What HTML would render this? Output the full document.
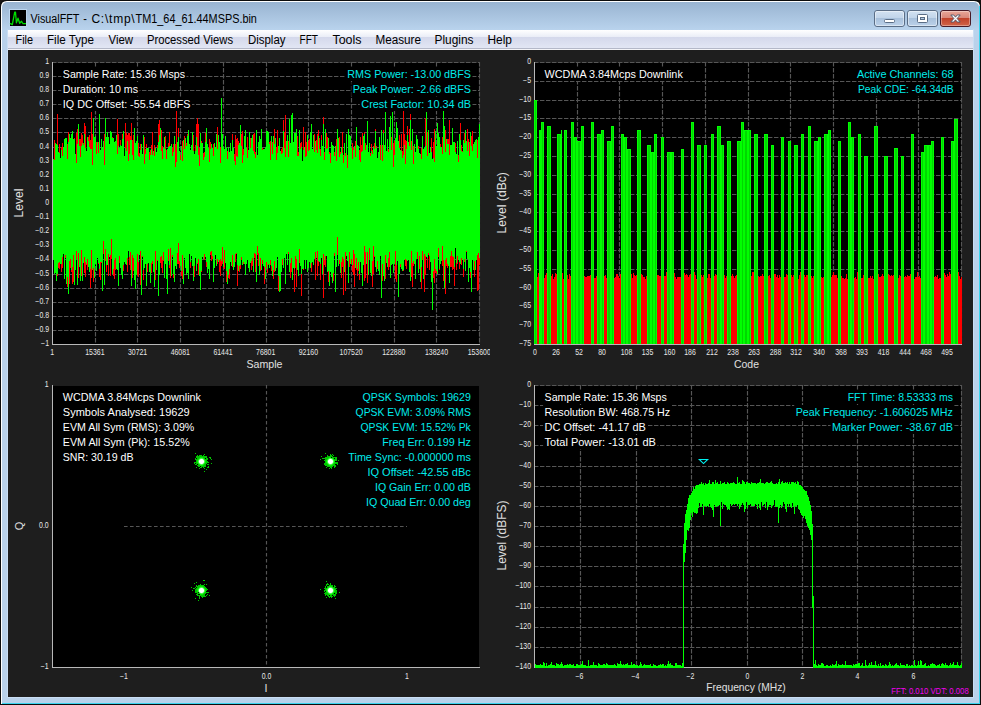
<!DOCTYPE html><html><head><meta charset="utf-8"><title>VisualFFT</title><style>
html,body{margin:0;padding:0;background:#000;}body{width:981px;height:705px;overflow:hidden;position:relative;font-family:"Liberation Sans",sans-serif;}
svg{position:absolute;left:0;top:0;}svg text{font-family:"Liberation Sans",sans-serif;}
</style></head><body>
<svg width="981" height="705" viewBox="0 0 981 705">
<defs>
<radialGradient id="cg"><stop offset="0" stop-color="#fff"/><stop offset="0.55" stop-color="#fff"/><stop offset="1" stop-color="#80ff80" stop-opacity="0"/></radialGradient>
<linearGradient id="fr" gradientUnits="userSpaceOnUse" x1="0" y1="2" x2="0" y2="703"><stop offset="0" stop-color="#99b4d1"/><stop offset="0.04" stop-color="#b9d3ed"/><stop offset="0.06" stop-color="#b9d1ea"/><stop offset="1" stop-color="#b9d1ea"/></linearGradient>
<linearGradient id="mb" x1="0" y1="0" x2="0" y2="1"><stop offset="0" stop-color="#ffffff"/><stop offset="0.385" stop-color="#eaedf7"/><stop offset="0.39" stop-color="#d4d8eb"/><stop offset="1" stop-color="#e2e6f4"/></linearGradient>
<linearGradient id="bt" x1="0" y1="0" x2="0" y2="1"><stop offset="0" stop-color="#d3e2f2"/><stop offset="0.45" stop-color="#c2d5ea"/><stop offset="0.5" stop-color="#a9c1dc"/><stop offset="1" stop-color="#bcd2ea"/></linearGradient>
<linearGradient id="cl" x1="0" y1="0" x2="0" y2="1"><stop offset="0" stop-color="#e9a99b"/><stop offset="0.45" stop-color="#d9887a"/><stop offset="0.5" stop-color="#c1432b"/><stop offset="1" stop-color="#d2664a"/></linearGradient>
</defs>
<rect x="0" y="0" width="981" height="705" fill="#181412"/>
<path d="M0 705V6Q0 0 6 0H975Q981 0 981 6V705z" fill="#0c0c0c"/>
<path d="M1 704V7Q1 1 7 1H974Q980 1 980 7V704z" fill="#ffffff"/>
<path d="M979 8V704H2V703H979z" fill="#3ad4ee"/>
<path d="M2 703V7.5Q2 2 7.5 2H973.5Q979 2 979 7.5V703z" fill="url(#fr)"/>
<rect x="979" y="6" width="1" height="698" fill="#3ad4ee"/>
<path d="M7.5 29.5V697.5H973.5V29.5" fill="none" stroke="#c9ddf3" stroke-width="1"/>
<rect x="8" y="30" width="965" height="18" fill="url(#mb)"/>
<rect x="8" y="48" width="965" height="1" fill="#b4b8c8"/>
<rect x="8" y="49" width="965" height="1" fill="#f4f4f8"/>
<rect x="8" y="50" width="965" height="647" fill="#1e1e1e"/>
<rect x="9.5" y="9.5" width="17" height="17" fill="none" stroke="#bcd5ee" stroke-width="1"/>
<rect x="10" y="10" width="16" height="16" fill="#000"/>
<path d="M10 23.4L12.3 24.6L13.5 18.5L14.7 12.2L15.5 12.2L16.4 22.8L18 18.2L19.7 23.3L21.5 21.3L22.9 23.5L26 23.7" fill="none" stroke="#00dc00" stroke-width="1.3" stroke-linejoin="round"/>
<text x="30.60" y="22.5" font-size="12" fill="#000" textLength="48.80" lengthAdjust="spacingAndGlyphs">VisualFFT</text>
<text x="83.20" y="22.5" font-size="12" fill="#000" textLength="3.60" lengthAdjust="spacingAndGlyphs">-</text>
<text x="91.40" y="22.5" font-size="12" fill="#000" textLength="43.30" lengthAdjust="spacing">C:\tmp\</text>
<text x="135.60" y="22.5" font-size="12" fill="#000" textLength="121.30" lengthAdjust="spacingAndGlyphs">TM1_64_61.44MSPS.bin</text>
<text x="15.50" y="44" font-size="12" fill="#000" textLength="17.50" lengthAdjust="spacingAndGlyphs">File</text>
<text x="47.00" y="44" font-size="12" fill="#000" textLength="47.00" lengthAdjust="spacingAndGlyphs">File Type</text>
<text x="108.50" y="44" font-size="12" fill="#000" textLength="24.50" lengthAdjust="spacingAndGlyphs">View</text>
<text x="147.00" y="44" font-size="12" fill="#000" textLength="86.00" lengthAdjust="spacingAndGlyphs">Processed Views</text>
<text x="248.00" y="44" font-size="12" fill="#000" textLength="37.50" lengthAdjust="spacingAndGlyphs">Display</text>
<text x="299.50" y="44" font-size="12" fill="#000" textLength="18.50" lengthAdjust="spacingAndGlyphs">FFT</text>
<text x="332.50" y="44" font-size="12" fill="#000" textLength="29.00" lengthAdjust="spacingAndGlyphs">Tools</text>
<text x="375.50" y="44" font-size="12" fill="#000" textLength="45.50" lengthAdjust="spacingAndGlyphs">Measure</text>
<text x="434.50" y="44" font-size="12" fill="#000" textLength="39.00" lengthAdjust="spacingAndGlyphs">Plugins</text>
<text x="487.50" y="44" font-size="12" fill="#000" textLength="24.50" lengthAdjust="spacingAndGlyphs">Help</text>
<rect x="874.5" y="10.5" width="30" height="16" rx="2.5" fill="url(#bt)" stroke="#5a6d86"/>
<rect x="907.5" y="10.5" width="30" height="16" rx="2.5" fill="url(#bt)" stroke="#5a6d86"/>
<rect x="940.5" y="10.5" width="30" height="16" rx="2.5" fill="url(#cl)" stroke="#471a26"/>
<rect x="884.5" y="19.5" width="10" height="3" rx="1" fill="#fff" stroke="#5a6d86"/>
<rect x="917.5" y="14.5" width="10" height="8" rx="1" fill="#fff" stroke="#5a6d86"/><rect x="920.5" y="17.5" width="4" height="2" fill="#b6cbe2" stroke="#5a6d86"/>
<path d="M950.8 15H953.8L955.5 17.2L957.2 15H960.2L957.1 18.5L960.2 22H957.2L955.5 19.8L953.8 22H950.8L953.9 18.5z" fill="#fff" stroke="#4a5468" stroke-width="0.9" stroke-linejoin="round"/>
<rect x="875.5" y="11.5" width="28" height="14" rx="1.5" fill="none" stroke="#fff" stroke-opacity="0.45"/>
<rect x="908.5" y="11.5" width="28" height="14" rx="1.5" fill="none" stroke="#fff" stroke-opacity="0.45"/>
<rect x="941.5" y="11.5" width="28" height="14" rx="1.5" fill="none" stroke="#fff" stroke-opacity="0.35"/>
<rect x="53" y="63" width="426" height="281" fill="#000"/>
<path d="M95.5 62V344M137.5 62V344M180.5 62V344M223.5 62V344M266.5 62V344M308.5 62V344M351.5 62V344M394.5 62V344M436.5 62V344M52 76.5H480M52 90.5H480M52 104.5H480M52 118.5H480M52 132.5H480M52 147.5H480M52 161.5H480M52 175.5H480M52 189.5H480M52 203.5H480M52 217.5H480M52 231.5H480M52 245.5H480M52 259.5H480M52 274.5H480M52 288.5H480M52 302.5H480M52 316.5H480M52 330.5H480M52 62.5H480M479.5 62V344" stroke="#565656" stroke-width="1.15" stroke-dasharray="4.4 1.6" fill="none"/>
<path d="M53.5 164V255M54.5 140V260M55.5 151V255M56.5 153V264M57.5 114V276M58.5 158V268M59.5 144V269M60.5 168V246M61.5 147V272M62.5 143V268M63.5 153V253M64.5 140V275M65.5 142V258M66.5 150V261M67.5 144V287M68.5 132V259M69.5 142V284M70.5 143V268M71.5 150V272M72.5 149V284M73.5 145V282M74.5 138V253M75.5 156V253M76.5 133V259M77.5 129V259M78.5 147V278M79.5 139V256M80.5 139V272M81.5 133V276M82.5 135V276M83.5 143V260M84.5 123V273M85.5 126V277M86.5 154V265M87.5 142V270M88.5 137V257M89.5 135V269M90.5 140V288M91.5 112V278M92.5 134V253M93.5 130V282M94.5 148V256M95.5 154V264M96.5 142V251M97.5 145V253M98.5 142V264M99.5 145V277M100.5 153V280M101.5 153V263M102.5 149V278M103.5 162V254M104.5 134V271M105.5 145V261M106.5 163V272M107.5 133V258M108.5 151V276M109.5 157V251M110.5 167V276M111.5 153V259M112.5 137V243M113.5 146V276M114.5 147V279M115.5 143V270M116.5 158V262M117.5 119V258M118.5 134V260M119.5 153V263M120.5 140V264M121.5 157V261M122.5 134V269M123.5 155V271M124.5 157V255M125.5 123V250M126.5 133V254M127.5 135V272M128.5 133V241M129.5 133V265M130.5 136V270M131.5 123V275M132.5 140V278M133.5 135V271M134.5 142V265M135.5 149V263M136.5 155V262M137.5 144V275M138.5 143V277M139.5 153V248M140.5 144V285M141.5 144V285M142.5 154V257M143.5 147V280M144.5 137V265M145.5 149V263M146.5 144V271M147.5 150V272M148.5 168V263M149.5 152V267M150.5 150V267M151.5 145V273M152.5 132V264M153.5 151V262M154.5 145V262M155.5 165V280M156.5 158V247M157.5 145V261M158.5 124V268M159.5 120V270M160.5 130V263M161.5 130V268M162.5 146V273M163.5 156V261M164.5 157V278M165.5 136V260M166.5 150V270M167.5 150V256M168.5 143V261M169.5 132V268M170.5 146V278M171.5 154V270M172.5 148V257M173.5 144V278M174.5 145V270M175.5 144V260M176.5 109V266M177.5 146V264M178.5 128V264M179.5 161V268M180.5 155V259M181.5 154V276M182.5 141V279M183.5 156V263M184.5 136V257M185.5 149V259M186.5 143V251M187.5 134V271M188.5 137V278M189.5 150V254M190.5 151V268M191.5 151V247M192.5 163V258M193.5 135V255M194.5 156V277M195.5 145V258M196.5 124V270M197.5 118V264M198.5 124V275M199.5 148V269M200.5 141V290M201.5 141V272M202.5 160V252M203.5 153V246M204.5 152V260M205.5 133V255M206.5 137V267M207.5 154V271M208.5 150V255M209.5 139V262M210.5 142V255M211.5 146V261M212.5 162V259M213.5 144V273M214.5 155V257M215.5 152V249M216.5 146V265M217.5 127V264M218.5 147V255M219.5 142V272M220.5 147V276M221.5 136V266M222.5 138V264M223.5 156V268M224.5 150V269M225.5 149V257M226.5 161V282M227.5 151V283M228.5 156V278M229.5 162V279M230.5 160V260M231.5 160V261M232.5 134V267M233.5 156V266M234.5 154V249M235.5 135V262M236.5 139V254M237.5 138V286M238.5 141V266M239.5 150V272M240.5 135V269M241.5 134V260M242.5 131V253M243.5 149V264M244.5 137V252M245.5 143V261M246.5 149V258M247.5 137V250M248.5 155V267M249.5 147V258M250.5 138V256M251.5 146V270M252.5 152V266M253.5 134V255M254.5 133V258M255.5 152V272M256.5 155V278M257.5 163V255M258.5 150V266M259.5 147V262M260.5 140V271M261.5 145V254M262.5 148V264M263.5 150V242M264.5 152V284M265.5 149V261M266.5 143V268M267.5 157V273M268.5 144V265M269.5 142V256M270.5 141V265M271.5 153V271M272.5 142V272M273.5 150V279M274.5 129V272M275.5 152V252M276.5 147V259M277.5 130V251M278.5 155V291M279.5 145V286M280.5 151V259M281.5 149V262M282.5 147V265M283.5 120V262M284.5 132V254M285.5 115V262M286.5 145V247M287.5 138V265M288.5 141V254M289.5 146V260M290.5 151V278M291.5 147V272M292.5 155V256M293.5 151V258M294.5 162V292M295.5 143V268M296.5 143V287M297.5 136V261M298.5 152V273M299.5 133V263M300.5 143V260M301.5 142V296M302.5 162V256M303.5 127V270M304.5 157V259M305.5 132V268M306.5 142V258M307.5 165V270M308.5 141V263M309.5 139V256M310.5 144V255M311.5 140V272M312.5 156V259M313.5 158V251M314.5 134V255M315.5 150V280M316.5 140V248M317.5 134V276M318.5 130V266M319.5 138V255M320.5 149V280M321.5 135V258M322.5 157V263M323.5 117V298M324.5 152V265M325.5 143V267M326.5 133V253M327.5 137V256M328.5 148V282M329.5 152V263M330.5 153V270M331.5 153V262M332.5 147V254M333.5 159V281M334.5 152V256M335.5 146V255M336.5 139V258M337.5 150V255M338.5 156V266M339.5 137V264M340.5 152V256M341.5 152V278M342.5 132V267M343.5 155V295M344.5 147V267M345.5 153V291M346.5 156V256M347.5 155V254M348.5 162V254M349.5 154V267M350.5 136V249M351.5 154V264M352.5 143V272M353.5 148V275M354.5 160V287M355.5 141V258M356.5 155V270M357.5 152V276M358.5 151V271M359.5 150V280M360.5 137V260M361.5 145V264M362.5 133V267M363.5 156V260M364.5 132V281M365.5 143V278M366.5 145V258M367.5 142V283M368.5 152V275M369.5 159V260M370.5 153V247M371.5 144V258M372.5 150V287M373.5 146V274M374.5 143V257M375.5 129V257M376.5 146V262M377.5 163V269M378.5 154V268M379.5 149V268M380.5 145V248M381.5 130V271M382.5 145V281M383.5 130V276M384.5 152V268M385.5 147V279M386.5 157V260M387.5 158V263M388.5 149V270M389.5 132V267M390.5 159V266M391.5 137V246M392.5 135V248M393.5 143V269M394.5 141V261M395.5 160V279M396.5 162V282M397.5 136V256M398.5 164V273M399.5 135V264M400.5 151V267M401.5 134V263M402.5 151V271M403.5 97V271M404.5 134V255M405.5 140V266M406.5 141V269M407.5 126V249M408.5 152V257M409.5 129V251M410.5 114V256M411.5 141V277M412.5 129V287M413.5 146V266M414.5 159V262M415.5 153V256M416.5 143V242M417.5 146V259M418.5 146V265M419.5 160V269M420.5 154V282M421.5 148V289M422.5 148V260M423.5 151V265M424.5 155V292M425.5 118V275M426.5 150V257M427.5 132V268M428.5 152V255M429.5 154V270M430.5 148V262M431.5 138V278M432.5 162V272M433.5 142V278M434.5 129V283M435.5 151V273M436.5 159V274M437.5 152V252M438.5 151V257M439.5 145V270M440.5 144V256M441.5 154V255M442.5 137V266M443.5 144V281M444.5 138V253M445.5 130V294M446.5 152V266M447.5 139V268M448.5 139V257M449.5 120V267M450.5 156V267M451.5 161V267M452.5 150V270M453.5 149V269M454.5 143V286M455.5 143V245M456.5 154V270M457.5 162V264M458.5 155V256M459.5 147V269M460.5 123V259M461.5 145V265M462.5 151V258M463.5 143V277M464.5 133V262M465.5 149V270M466.5 144V252M467.5 129V250M468.5 139V268M469.5 142V260M470.5 148V278M471.5 136V270M472.5 131V253M473.5 157V269M474.5 144V277M475.5 144V253M476.5 154V253M477.5 140V291M478.5 161V290M479.5 155V265" stroke="#ff0000" stroke-width="1" fill="none" shape-rendering="crispEdges"/>
<path d="M53.5 159V260M54.5 160V274M55.5 143V273M56.5 144V281M57.5 145V274M58.5 152V263M59.5 153V262M60.5 158V264M61.5 150V264M62.5 156V257M63.5 147V254M64.5 139V279M65.5 138V255M66.5 138V284M67.5 159V277M68.5 142V294M69.5 134V261M70.5 138V259M71.5 134V270M72.5 131V267M73.5 139V255M74.5 139V285M75.5 154V270M76.5 163V251M77.5 144V285M78.5 124V253M79.5 146V267M80.5 157V281M81.5 146V250M82.5 143V281M83.5 145V263M84.5 134V257M85.5 148V262M86.5 151V264M87.5 137V259M88.5 141V267M89.5 147V272M90.5 149V269M91.5 149V250M92.5 165V270M93.5 118V268M94.5 137V278M95.5 136V264M96.5 154V271M97.5 142V258M98.5 153V263M99.5 114V269M100.5 150V262M101.5 139V262M102.5 147V291M103.5 141V241M104.5 165V285M105.5 118V249M106.5 137V265M107.5 132V265M108.5 137V254M109.5 144V257M110.5 131V255M111.5 132V239M112.5 138V274M113.5 138V269M114.5 142V260M115.5 141V258M116.5 135V269M117.5 154V270M118.5 146V286M119.5 148V256M120.5 145V268M121.5 146V275M122.5 139V279M123.5 131V265M124.5 156V262M125.5 148V264M126.5 151V265M127.5 141V258M128.5 161V251M129.5 154V257M130.5 140V252M131.5 140V286M132.5 155V255M133.5 160V258M134.5 128V280M135.5 143V289M136.5 141V275M137.5 136V254M138.5 156V262M139.5 157V255M140.5 150V251M141.5 144V295M142.5 154V256M143.5 135V270M144.5 164V268M145.5 154V264M146.5 148V286M147.5 148V264M148.5 148V263M149.5 160V272M150.5 155V283M151.5 149V263M152.5 155V261M153.5 151V272M154.5 156V287M155.5 148V251M156.5 152V270M157.5 148V260M158.5 142V296M159.5 135V275M160.5 128V257M161.5 151V256M162.5 159V260M163.5 148V252M164.5 137V278M165.5 149V264M166.5 159V279M167.5 149V294M168.5 147V249M169.5 146V265M170.5 146V248M171.5 144V276M172.5 156V255M173.5 152V274M174.5 136V282M175.5 167V266M176.5 162V269M177.5 142V253M178.5 137V243M179.5 151V261M180.5 160V266M181.5 146V271M182.5 161V255M183.5 140V284M184.5 149V258M185.5 138V268M186.5 146V275M187.5 136V273M188.5 130V279M189.5 144V254M190.5 150V262M191.5 145V256M192.5 132V266M193.5 151V281M194.5 154V266M195.5 151V258M196.5 137V271M197.5 146V263M198.5 155V259M199.5 166V276M200.5 133V290M201.5 143V271M202.5 143V257M203.5 160V259M204.5 157V254M205.5 142V257M206.5 128V262M207.5 144V273M208.5 148V269M209.5 162V279M210.5 149V252M211.5 144V251M212.5 148V256M213.5 156V282M214.5 143V268M215.5 147V255M216.5 134V266M217.5 149V259M218.5 135V262M219.5 142V260M220.5 163V259M221.5 98V261M222.5 134V247M223.5 147V267M224.5 149V250M225.5 136V263M226.5 148V271M227.5 159V284M228.5 147V275M229.5 152V269M230.5 143V262M231.5 151V266M232.5 140V255M233.5 148V270M234.5 161V267M235.5 165V254M236.5 156V253M237.5 157V265M238.5 145V271M239.5 143V266M240.5 125V265M241.5 146V257M242.5 163V265M243.5 155V262M244.5 136V264M245.5 130V275M246.5 148V264M247.5 158V260M248.5 150V268M249.5 132V272M250.5 148V263M251.5 138V261M252.5 135V258M253.5 151V272M254.5 154V253M255.5 158V254M256.5 130V282M257.5 155V246M258.5 142V253M259.5 136V275M260.5 139V258M261.5 129V270M262.5 150V260M263.5 149V266M264.5 149V267M265.5 147V279M266.5 131V262M267.5 131V269M268.5 132V264M269.5 144V268M270.5 160V260M271.5 136V266M272.5 154V276M273.5 136V270M274.5 144V261M275.5 138V271M276.5 160V268M277.5 153V257M278.5 146V276M279.5 138V292M280.5 151V291M281.5 154V272M282.5 153V259M283.5 131V268M284.5 148V258M285.5 157V284M286.5 141V254M287.5 135V265M288.5 157V252M289.5 119V272M290.5 143V263M291.5 115V258M292.5 113V280M293.5 142V268M294.5 133V269M295.5 133V256M296.5 129V259M297.5 156V270M298.5 156V276M299.5 130V249M300.5 149V266M301.5 147V274M302.5 161V269M303.5 150V269M304.5 147V260M305.5 157V269M306.5 156V260M307.5 135V272M308.5 151V268M309.5 150V262M310.5 132V268M311.5 124V263M312.5 149V262M313.5 135V265M314.5 152V259M315.5 141V252M316.5 150V258M317.5 153V251M318.5 136V261M319.5 149V262M320.5 156V264M321.5 140V258M322.5 146V274M323.5 124V254M324.5 160V260M325.5 129V256M326.5 149V256M327.5 148V272M328.5 138V271M329.5 154V286M330.5 163V272M331.5 142V277M332.5 145V283M333.5 146V273M334.5 156V253M335.5 146V292M336.5 161V267M337.5 129V237M338.5 138V266M339.5 157V260M340.5 154V273M341.5 147V262M342.5 153V257M343.5 163V259M344.5 143V272M345.5 156V252M346.5 134V256M347.5 168V261M348.5 129V283M349.5 135V252M350.5 136V264M351.5 148V259M352.5 159V265M353.5 150V250M354.5 146V254M355.5 157V268M356.5 127V258M357.5 145V269M358.5 146V262M359.5 160V274M360.5 162V262M361.5 152V273M362.5 151V286M363.5 136V265M364.5 134V246M365.5 150V252M366.5 145V264M367.5 121V252M368.5 152V275M369.5 143V248M370.5 156V273M371.5 151V276M372.5 154V261M373.5 147V246M374.5 149V256M375.5 131V267M376.5 148V272M377.5 158V261M378.5 152V271M379.5 137V275M380.5 160V256M381.5 130V298M382.5 161V264M383.5 133V276M384.5 145V281M385.5 112V255M386.5 151V263M387.5 139V267M388.5 152V258M389.5 127V252M390.5 116V278M391.5 150V265M392.5 112V264M393.5 167V273M394.5 155V264M395.5 138V251M396.5 122V265M397.5 128V261M398.5 141V297M399.5 148V274M400.5 150V264M401.5 151V269M402.5 158V271M403.5 155V270M404.5 145V260M405.5 164V259M406.5 149V260M407.5 135V261M408.5 142V260M409.5 146V272M410.5 120V281M411.5 150V251M412.5 129V263M413.5 164V261M414.5 144V264M415.5 152V279M416.5 135V259M417.5 139V252M418.5 149V273M419.5 153V256M420.5 154V282M421.5 159V267M422.5 136V251M423.5 149V279M424.5 148V254M425.5 146V256M426.5 112V257M427.5 156V258M428.5 130V253M429.5 153V256M430.5 147V262M431.5 152V282M432.5 159V310M433.5 158V271M434.5 162V259M435.5 131V269M436.5 146V271M437.5 123V274M438.5 133V248M439.5 137V269M440.5 147V264M441.5 147V261M442.5 154V246M443.5 104V260M444.5 126V288M445.5 152V260M446.5 139V258M447.5 144V264M448.5 144V266M449.5 155V283M450.5 145V256M451.5 145V251M452.5 128V256M453.5 142V257M454.5 142V267M455.5 152V248M456.5 154V263M457.5 141V256M458.5 162V260M459.5 134V262M460.5 140V264M461.5 151V258M462.5 152V260M463.5 140V269M464.5 143V259M465.5 130V271M466.5 141V251M467.5 151V259M468.5 142V282M469.5 156V268M470.5 132V272M471.5 146V292M472.5 151V260M473.5 144V270M474.5 142V261M475.5 140V270M476.5 139V260M477.5 158V255M478.5 137V253M479.5 124V258" stroke="#00ff00" stroke-width="1" fill="none" shape-rendering="crispEdges"/>
<path d="M52.5 62V345M52 344.5H480" stroke="#b8b8b8" stroke-width="1" fill="none" shape-rendering="crispEdges"/>
<text x="45.15" y="64.3" font-size="8.4" fill="#e8e8e8" textLength="3.85" lengthAdjust="spacingAndGlyphs">1</text>
<text x="39.40" y="78.3" font-size="8.4" fill="#e8e8e8" textLength="9.60" lengthAdjust="spacingAndGlyphs">0.9</text>
<text x="39.40" y="92.3" font-size="8.4" fill="#e8e8e8" textLength="9.60" lengthAdjust="spacingAndGlyphs">0.8</text>
<text x="39.40" y="106.3" font-size="8.4" fill="#e8e8e8" textLength="9.60" lengthAdjust="spacingAndGlyphs">0.7</text>
<text x="39.40" y="120.3" font-size="8.4" fill="#e8e8e8" textLength="9.60" lengthAdjust="spacingAndGlyphs">0.6</text>
<text x="39.40" y="134.3" font-size="8.4" fill="#e8e8e8" textLength="9.60" lengthAdjust="spacingAndGlyphs">0.5</text>
<text x="39.40" y="149.3" font-size="8.4" fill="#e8e8e8" textLength="9.60" lengthAdjust="spacingAndGlyphs">0.4</text>
<text x="39.40" y="163.3" font-size="8.4" fill="#e8e8e8" textLength="9.60" lengthAdjust="spacingAndGlyphs">0.3</text>
<text x="39.40" y="177.3" font-size="8.4" fill="#e8e8e8" textLength="9.60" lengthAdjust="spacingAndGlyphs">0.2</text>
<text x="39.40" y="191.3" font-size="8.4" fill="#e8e8e8" textLength="9.60" lengthAdjust="spacingAndGlyphs">0.1</text>
<text x="45.15" y="205.3" font-size="8.4" fill="#e8e8e8" textLength="3.85" lengthAdjust="spacingAndGlyphs">0</text>
<text x="35.35" y="219.3" font-size="8.4" fill="#e8e8e8" textLength="13.65" lengthAdjust="spacingAndGlyphs">−0.1</text>
<text x="35.35" y="233.3" font-size="8.4" fill="#e8e8e8" textLength="13.65" lengthAdjust="spacingAndGlyphs">−0.2</text>
<text x="35.35" y="247.3" font-size="8.4" fill="#e8e8e8" textLength="13.65" lengthAdjust="spacingAndGlyphs">−0.3</text>
<text x="35.35" y="261.3" font-size="8.4" fill="#e8e8e8" textLength="13.65" lengthAdjust="spacingAndGlyphs">−0.4</text>
<text x="35.35" y="276.3" font-size="8.4" fill="#e8e8e8" textLength="13.65" lengthAdjust="spacingAndGlyphs">−0.5</text>
<text x="35.35" y="290.3" font-size="8.4" fill="#e8e8e8" textLength="13.65" lengthAdjust="spacingAndGlyphs">−0.6</text>
<text x="35.35" y="304.3" font-size="8.4" fill="#e8e8e8" textLength="13.65" lengthAdjust="spacingAndGlyphs">−0.7</text>
<text x="35.35" y="318.3" font-size="8.4" fill="#e8e8e8" textLength="13.65" lengthAdjust="spacingAndGlyphs">−0.8</text>
<text x="35.35" y="332.3" font-size="8.4" fill="#e8e8e8" textLength="13.65" lengthAdjust="spacingAndGlyphs">−0.9</text>
<text x="41.10" y="346.3" font-size="8.4" fill="#e8e8e8" textLength="7.90" lengthAdjust="spacingAndGlyphs">−1</text>
<text x="50.28" y="355" font-size="8.4" fill="#e8e8e8" textLength="3.85" lengthAdjust="spacingAndGlyphs">1</text>
<text x="85.28" y="355" font-size="8.4" fill="#e8e8e8" textLength="19.25" lengthAdjust="spacingAndGlyphs">15361</text>
<text x="127.98" y="355" font-size="8.4" fill="#e8e8e8" textLength="19.25" lengthAdjust="spacingAndGlyphs">30721</text>
<text x="170.68" y="355" font-size="8.4" fill="#e8e8e8" textLength="19.25" lengthAdjust="spacingAndGlyphs">46081</text>
<text x="213.38" y="355" font-size="8.4" fill="#e8e8e8" textLength="19.25" lengthAdjust="spacingAndGlyphs">61441</text>
<text x="256.07" y="355" font-size="8.4" fill="#e8e8e8" textLength="19.25" lengthAdjust="spacingAndGlyphs">76801</text>
<text x="298.78" y="355" font-size="8.4" fill="#e8e8e8" textLength="19.25" lengthAdjust="spacingAndGlyphs">92160</text>
<text x="339.55" y="355" font-size="8.4" fill="#e8e8e8" textLength="23.10" lengthAdjust="spacingAndGlyphs">107520</text>
<text x="382.25" y="355" font-size="8.4" fill="#e8e8e8" textLength="23.10" lengthAdjust="spacingAndGlyphs">122880</text>
<text x="424.95" y="355" font-size="8.4" fill="#e8e8e8" textLength="23.10" lengthAdjust="spacingAndGlyphs">138240</text>
<text x="467.65" y="355" font-size="8.4" fill="#e8e8e8" textLength="23.10" lengthAdjust="spacingAndGlyphs">153600</text>
<rect x="490" y="346" width="12" height="12" fill="#1e1e1e"/>
<text x="246.50" y="368" font-size="10.7" fill="#e0e0e0" textLength="36.00" lengthAdjust="spacingAndGlyphs">Sample</text>
<text transform="translate(23 217.50) rotate(-90)" font-size="12.5" fill="#e0e0e0" textLength="29.00" lengthAdjust="spacingAndGlyphs">Level</text>
<rect x="61.3" y="67" width="125.2" height="14" fill="#000"/>
<text x="62.80" y="78" font-size="11" fill="#ffffff" textLength="122.20" lengthAdjust="spacingAndGlyphs">Sample Rate: 15.36 Msps</text>
<rect x="61.3" y="82" width="78.2" height="14" fill="#000"/>
<text x="62.80" y="93" font-size="11" fill="#ffffff" textLength="75.20" lengthAdjust="spacingAndGlyphs">Duration: 10 ms</text>
<rect x="61.3" y="97" width="130.7" height="14" fill="#000"/>
<text x="62.80" y="108" font-size="11" fill="#ffffff" textLength="127.70" lengthAdjust="spacingAndGlyphs">IQ DC Offset: -55.54 dBFS</text>
<rect x="345.8" y="67" width="126.7" height="14" fill="#000"/>
<text x="347.30" y="78" font-size="11" fill="#00ecec" textLength="123.70" lengthAdjust="spacingAndGlyphs">RMS Power: -13.00 dBFS</text>
<rect x="351.3" y="82" width="121.2" height="14" fill="#000"/>
<text x="352.80" y="93" font-size="11" fill="#00ecec" textLength="118.20" lengthAdjust="spacingAndGlyphs">Peak Power: -2.66 dBFS</text>
<rect x="359.8" y="97" width="112.7" height="14" fill="#000"/>
<text x="361.30" y="108" font-size="11" fill="#00ecec" textLength="109.70" lengthAdjust="spacingAndGlyphs">Crest Factor: 10.34 dB</text>
<rect x="535" y="63" width="426" height="281" fill="#000"/>
<path d="M577.5 62V344M619.5 62V344M662.5 62V344M705.5 62V344M748.5 62V344M790.5 62V344M833.5 62V344M876.5 62V344M918.5 62V344M534 81.5H962M534 100.5H962M534 118.5H962M534 137.5H962M534 156.5H962M534 175.5H962M534 194.5H962M534 212.5H962M534 231.5H962M534 250.5H962M534 269.5H962M534 288.5H962M534 306.5H962M534 325.5H962M534 62.5H962M961.5 62V344" stroke="#565656" stroke-width="1.15" stroke-dasharray="4.4 1.6" fill="none"/>
<path d="M535.5 276V344M536.5 275V344M537.5 277V344M538.5 273V344M539.5 274V344M540.5 279V344M541.5 274V344M542.5 276V344M543.5 273V344M544.5 278V344M545.5 275V344M546.5 273V344M547.5 274V344M548.5 277V344M549.5 277V344M550.5 274V344M551.5 276V344M552.5 274V344M553.5 279V344M554.5 277V344M555.5 273V344M556.5 274V344M557.5 276V344M558.5 273V344M559.5 277V344M560.5 273V344M561.5 276V344M562.5 273V344M563.5 279V344M564.5 275V344M565.5 276V344M566.5 277V344M567.5 275V344M568.5 279V344M569.5 274V344M570.5 276V344M571.5 279V344M572.5 275V344M573.5 274V344M574.5 275V344M575.5 276V344M576.5 274V344M577.5 279V344M578.5 274V344M579.5 273V344M580.5 275V344M581.5 278V344M582.5 279V344M583.5 277V344M584.5 276V344M585.5 277V344M586.5 277V344M587.5 276V344M588.5 276V344M589.5 276V344M590.5 275V344M591.5 276V344M592.5 274V344M593.5 276V344M594.5 278V344M595.5 278V344M596.5 276V344M597.5 277V344M598.5 276V344M599.5 274V344M600.5 274V344M601.5 278V344M602.5 277V344M603.5 275V344M604.5 276V344M605.5 275V344M606.5 278V344M607.5 277V344M608.5 273V344M609.5 274V344M610.5 279V344M611.5 276V344M612.5 276V344M613.5 276V344M614.5 278V344M615.5 277V344M616.5 274V344M617.5 274V344M618.5 276V344M619.5 278V344M620.5 274V344M621.5 273V344M622.5 276V344M623.5 277V344M624.5 276V344M625.5 277V344M626.5 276V344M627.5 272V344M628.5 277V344M629.5 276V344M630.5 275V344M631.5 274V344M632.5 278V344M633.5 273V344M634.5 275V344M635.5 276V344M636.5 275V344M637.5 276V344M638.5 277V344M639.5 277V344M640.5 278V344M641.5 274V344M642.5 275V344M643.5 277V344M644.5 277V344M645.5 279V344M646.5 276V344M647.5 275V344M648.5 277V344M649.5 279V344M650.5 276V344M651.5 277V344M652.5 276V344M653.5 277V344M654.5 276V344M655.5 275V344M656.5 274V344M657.5 275V344M658.5 275V344M659.5 276V344M660.5 276V344M661.5 272V344M662.5 278V344M663.5 275V344M664.5 276V344M665.5 276V344M666.5 272V344M667.5 275V344M668.5 277V344M669.5 279V344M670.5 276V344M671.5 276V344M672.5 275V344M673.5 278V344M674.5 273V344M675.5 277V344M676.5 279V344M677.5 277V344M678.5 277V344M679.5 277V344M680.5 277V344M681.5 274V344M682.5 278V344M683.5 277V344M684.5 273V344M685.5 275V344M686.5 274V344M687.5 275V344M688.5 277V344M689.5 275V344M690.5 274V344M691.5 276V344M692.5 273V344M693.5 274V344M694.5 272V344M695.5 275V344M696.5 279V344M697.5 274V344M698.5 276V344M699.5 272V344M700.5 274V344M701.5 275V344M702.5 277V344M703.5 275V344M704.5 276V344M705.5 276V344M706.5 276V344M707.5 278V344M708.5 274V344M709.5 274V344M710.5 278V344M711.5 277V344M712.5 278V344M713.5 278V344M714.5 276V344M715.5 274V344M716.5 275V344M717.5 274V344M718.5 276V344M719.5 276V344M720.5 278V344M721.5 275V344M722.5 278V344M723.5 272V344M724.5 275V344M725.5 278V344M726.5 276V344M727.5 275V344M728.5 279V344M729.5 272V344M730.5 278V344M731.5 276V344M732.5 274V344M733.5 276V344M734.5 278V344M735.5 276V344M736.5 275V344M737.5 276V344M738.5 276V344M739.5 279V344M740.5 279V344M741.5 278V344M742.5 276V344M743.5 276V344M744.5 275V344M745.5 276V344M746.5 277V344M747.5 276V344M748.5 275V344M749.5 278V344M750.5 278V344M751.5 276V344M752.5 272V344M753.5 272V344M754.5 276V344M755.5 278V344M756.5 276V344M757.5 275V344M758.5 276V344M759.5 277V344M760.5 276V344M761.5 276V344M762.5 274V344M763.5 276V344M764.5 274V344M765.5 276V344M766.5 278V344M767.5 275V344M768.5 276V344M769.5 275V344M770.5 278V344M771.5 272V344M772.5 278V344M773.5 276V344M774.5 274V344M775.5 274V344M776.5 277V344M777.5 275V344M778.5 278V344M779.5 275V344M780.5 277V344M781.5 276V344M782.5 274V344M783.5 277V344M784.5 277V344M785.5 277V344M786.5 274V344M787.5 275V344M788.5 275V344M789.5 275V344M790.5 272V344M791.5 275V344M792.5 277V344M793.5 275V344M794.5 278V344M795.5 276V344M796.5 275V344M797.5 279V344M798.5 279V344M799.5 275V344M800.5 272V344M801.5 272V344M802.5 274V344M803.5 278V344M804.5 275V344M805.5 277V344M806.5 275V344M807.5 275V344M808.5 272V344M809.5 276V344M810.5 275V344M811.5 276V344M812.5 278V344M813.5 276V344M814.5 276V344M815.5 276V344M816.5 279V344M817.5 277V344M818.5 275V344M819.5 273V344M820.5 276V344M821.5 277V344M822.5 278V344M823.5 277V344M824.5 278V344M825.5 275V344M826.5 279V344M827.5 275V344M828.5 278V344M829.5 278V344M830.5 272V344M831.5 277V344M832.5 275V344M833.5 272V344M834.5 275V344M835.5 275V344M836.5 275V344M837.5 278V344M838.5 274V344M839.5 279V344M840.5 273V344M841.5 276V344M842.5 278V344M843.5 278V344M844.5 279V344M845.5 278V344M846.5 274V344M847.5 279V344M848.5 273V344M849.5 276V344M850.5 275V344M851.5 276V344M852.5 273V344M853.5 274V344M854.5 278V344M855.5 277V344M856.5 279V344M857.5 272V344M858.5 274V344M859.5 277V344M860.5 276V344M861.5 278V344M862.5 278V344M863.5 275V344M864.5 276V344M865.5 277V344M866.5 278V344M867.5 279V344M868.5 278V344M869.5 278V344M870.5 276V344M871.5 278V344M872.5 276V344M873.5 279V344M874.5 275V344M875.5 277V344M876.5 275V344M877.5 277V344M878.5 274V344M879.5 277V344M880.5 277V344M881.5 276V344M882.5 274V344M883.5 276V344M884.5 277V344M885.5 274V344M886.5 275V344M887.5 276V344M888.5 274V344M889.5 275V344M890.5 276V344M891.5 275V344M892.5 276V344M893.5 275V344M894.5 277V344M895.5 276V344M896.5 274V344M897.5 277V344M898.5 278V344M899.5 275V344M900.5 276V344M901.5 275V344M902.5 277V344M903.5 278V344M904.5 277V344M905.5 276V344M906.5 277V344M907.5 275V344M908.5 276V344M909.5 276V344M910.5 274V344M911.5 276V344M912.5 272V344M913.5 276V344M914.5 279V344M915.5 277V344M916.5 277V344M917.5 272V344M918.5 277V344M919.5 276V344M920.5 278V344M921.5 276V344M922.5 278V344M923.5 274V344M924.5 274V344M925.5 276V344M926.5 274V344M927.5 274V344M928.5 276V344M929.5 276V344M930.5 273V344M931.5 275V344M932.5 276V344M933.5 275V344M934.5 277V344M935.5 276V344M936.5 277V344M937.5 275V344M938.5 279V344M939.5 278V344M940.5 278V344M941.5 276V344M942.5 274V344M943.5 276V344M944.5 273V344M945.5 275V344M946.5 277V344M947.5 274V344M948.5 276V344M949.5 272V344M950.5 274V344M951.5 276V344M952.5 274V344M953.5 276V344M954.5 274V344M955.5 276V344M956.5 274V344M957.5 277V344M958.5 272V344M959.5 276V344M960.5 279V344M961.5 277V344" stroke="#ff0000" stroke-width="1" fill="none" shape-rendering="crispEdges"/>
<path d="M534.5 62V345M534 344.5H962" stroke="#b8b8b8" stroke-width="1" fill="none" shape-rendering="crispEdges"/>
<path d="M534 100H537V344H534zM539 130H541V344H539zM541 122H544V344H541zM547 126H551V344H547zM557 134H561V344H557zM561 130H562V344H561zM564 130H567V344H564zM571 122H574V344H571zM574 137H577V344H574zM577 141H581V344H577zM581 126H584V344H581zM591 122H594V344H591zM597 134H601V344H597zM601 130H604V344H601zM607 141H611V344H607zM611 126H614V344H611zM621 134H624V344H621zM624 137H627V344H624zM627 149H631V344H627zM637 130H641V344H637zM647 145H651V344H647zM651 152H654V344H651zM654 134H657V344H654zM661 137H664V344H661zM667 152H671V344H667zM671 152H674V344H671zM681 149H684V344H681zM691 122H694V344H691zM697 145H701V344H697zM704 145H707V344H704zM711 134H714V344H711zM717 126H721V344H717zM721 145H724V344H721zM727 141H731V344H727zM737 141H741V344H737zM741 122H744V344H741zM744 130H748V344H744zM748 130H751V344H748zM754 134H758V344H754zM764 134H768V344H764zM771 145H774V344H771zM781 137H784V344H781zM788 141H791V344H788zM794 145H798V344H794zM801 134H804V344H801zM808 126H811V344H808zM814 141H818V344H814zM818 137H821V344H818zM824 134H828V344H824zM828 130H831V344H828zM838 141H841V344H838zM848 122H851V344H848zM851 137H854V344H851zM858 134H861V344H858zM864 156H868V344H864zM874 126H878V344H874zM884 156H888V344H884zM894 148H898V344H894zM901 156H904V344H901zM911 134H914V344H911zM921 152H924V344H921zM924 145H928V344H924zM928 145H931V344H928zM931 141H934V344H931zM941 137H944V344H941zM951 141H954V344H951zM954 119H958V344H954z" fill="#00ff00" shape-rendering="crispEdges"/>
<path d="M535 101H536V344H535zM542 123H543V344H542zM548 127H550V344H548zM558 135H560V344H558zM565 131H566V344H565zM572 123H573V344H572zM575 138H576V344H575zM578 142H580V344H578zM582 127H583V344H582zM592 123H593V344H592zM598 135H600V344H598zM602 131H603V344H602zM608 142H610V344H608zM612 127H613V344H612zM622 135H623V344H622zM625 138H626V344H625zM628 150H630V344H628zM638 131H640V344H638zM648 146H650V344H648zM652 153H653V344H652zM655 135H656V344H655zM662 138H663V344H662zM668 153H670V344H668zM672 153H673V344H672zM682 150H683V344H682zM692 123H693V344H692zM698 146H700V344H698zM705 146H706V344H705zM712 135H713V344H712zM718 127H720V344H718zM722 146H723V344H722zM728 142H730V344H728zM738 142H740V344H738zM742 123H743V344H742zM745 131H747V344H745zM749 131H750V344H749zM755 135H757V344H755zM765 135H767V344H765zM772 146H773V344H772zM782 138H783V344H782zM789 142H790V344H789zM795 146H797V344H795zM802 135H803V344H802zM809 127H810V344H809zM815 142H817V344H815zM819 138H820V344H819zM825 135H827V344H825zM829 131H830V344H829zM839 142H840V344H839zM849 123H850V344H849zM852 138H853V344H852zM859 135H860V344H859zM865 157H867V344H865zM875 127H877V344H875zM885 157H887V344H885zM895 149H897V344H895zM902 157H903V344H902zM912 135H913V344H912zM922 153H923V344H922zM925 146H927V344H925zM929 146H930V344H929zM932 142H933V344H932zM942 138H943V344H942zM952 142H953V344H952zM955 120H957V344H955z" fill="#00d800" shape-rendering="crispEdges"/>
<text x="527.15" y="64.3" font-size="8.4" fill="#e8e8e8" textLength="3.85" lengthAdjust="spacingAndGlyphs">0</text>
<text x="523.10" y="83.3" font-size="8.4" fill="#e8e8e8" textLength="7.90" lengthAdjust="spacingAndGlyphs">−5</text>
<text x="519.25" y="102.3" font-size="8.4" fill="#e8e8e8" textLength="11.75" lengthAdjust="spacingAndGlyphs">−10</text>
<text x="519.25" y="120.3" font-size="8.4" fill="#e8e8e8" textLength="11.75" lengthAdjust="spacingAndGlyphs">−15</text>
<text x="519.25" y="139.3" font-size="8.4" fill="#e8e8e8" textLength="11.75" lengthAdjust="spacingAndGlyphs">−20</text>
<text x="519.25" y="158.3" font-size="8.4" fill="#e8e8e8" textLength="11.75" lengthAdjust="spacingAndGlyphs">−25</text>
<text x="519.25" y="177.3" font-size="8.4" fill="#e8e8e8" textLength="11.75" lengthAdjust="spacingAndGlyphs">−30</text>
<text x="519.25" y="196.3" font-size="8.4" fill="#e8e8e8" textLength="11.75" lengthAdjust="spacingAndGlyphs">−35</text>
<text x="519.25" y="214.3" font-size="8.4" fill="#e8e8e8" textLength="11.75" lengthAdjust="spacingAndGlyphs">−40</text>
<text x="519.25" y="233.3" font-size="8.4" fill="#e8e8e8" textLength="11.75" lengthAdjust="spacingAndGlyphs">−45</text>
<text x="519.25" y="252.3" font-size="8.4" fill="#e8e8e8" textLength="11.75" lengthAdjust="spacingAndGlyphs">−50</text>
<text x="519.25" y="271.3" font-size="8.4" fill="#e8e8e8" textLength="11.75" lengthAdjust="spacingAndGlyphs">−55</text>
<text x="519.25" y="290.3" font-size="8.4" fill="#e8e8e8" textLength="11.75" lengthAdjust="spacingAndGlyphs">−60</text>
<text x="519.25" y="308.3" font-size="8.4" fill="#e8e8e8" textLength="11.75" lengthAdjust="spacingAndGlyphs">−65</text>
<text x="519.25" y="327.3" font-size="8.4" fill="#e8e8e8" textLength="11.75" lengthAdjust="spacingAndGlyphs">−70</text>
<text x="519.25" y="346.3" font-size="8.4" fill="#e8e8e8" textLength="11.75" lengthAdjust="spacingAndGlyphs">−75</text>
<text x="533.08" y="355" font-size="8.4" fill="#e8e8e8" textLength="3.85" lengthAdjust="spacingAndGlyphs">0</text>
<text x="552.15" y="355" font-size="8.4" fill="#e8e8e8" textLength="7.70" lengthAdjust="spacingAndGlyphs">26</text>
<text x="575.15" y="355" font-size="8.4" fill="#e8e8e8" textLength="7.70" lengthAdjust="spacingAndGlyphs">52</text>
<text x="598.15" y="355" font-size="8.4" fill="#e8e8e8" textLength="7.70" lengthAdjust="spacingAndGlyphs">80</text>
<text x="620.73" y="355" font-size="8.4" fill="#e8e8e8" textLength="11.55" lengthAdjust="spacingAndGlyphs">108</text>
<text x="641.73" y="355" font-size="8.4" fill="#e8e8e8" textLength="11.55" lengthAdjust="spacingAndGlyphs">135</text>
<text x="663.73" y="355" font-size="8.4" fill="#e8e8e8" textLength="11.55" lengthAdjust="spacingAndGlyphs">160</text>
<text x="684.23" y="355" font-size="8.4" fill="#e8e8e8" textLength="11.55" lengthAdjust="spacingAndGlyphs">186</text>
<text x="706.23" y="355" font-size="8.4" fill="#e8e8e8" textLength="11.55" lengthAdjust="spacingAndGlyphs">212</text>
<text x="727.23" y="355" font-size="8.4" fill="#e8e8e8" textLength="11.55" lengthAdjust="spacingAndGlyphs">238</text>
<text x="748.23" y="355" font-size="8.4" fill="#e8e8e8" textLength="11.55" lengthAdjust="spacingAndGlyphs">263</text>
<text x="769.73" y="355" font-size="8.4" fill="#e8e8e8" textLength="11.55" lengthAdjust="spacingAndGlyphs">288</text>
<text x="790.23" y="355" font-size="8.4" fill="#e8e8e8" textLength="11.55" lengthAdjust="spacingAndGlyphs">312</text>
<text x="813.23" y="355" font-size="8.4" fill="#e8e8e8" textLength="11.55" lengthAdjust="spacingAndGlyphs">340</text>
<text x="835.23" y="355" font-size="8.4" fill="#e8e8e8" textLength="11.55" lengthAdjust="spacingAndGlyphs">368</text>
<text x="856.23" y="355" font-size="8.4" fill="#e8e8e8" textLength="11.55" lengthAdjust="spacingAndGlyphs">393</text>
<text x="877.73" y="355" font-size="8.4" fill="#e8e8e8" textLength="11.55" lengthAdjust="spacingAndGlyphs">418</text>
<text x="899.23" y="355" font-size="8.4" fill="#e8e8e8" textLength="11.55" lengthAdjust="spacingAndGlyphs">444</text>
<text x="920.23" y="355" font-size="8.4" fill="#e8e8e8" textLength="11.55" lengthAdjust="spacingAndGlyphs">468</text>
<text x="941.23" y="355" font-size="8.4" fill="#e8e8e8" textLength="11.55" lengthAdjust="spacingAndGlyphs">495</text>
<text x="734.00" y="368" font-size="10.7" fill="#e0e0e0" textLength="25.00" lengthAdjust="spacingAndGlyphs">Code</text>
<text transform="translate(505.5 233.45) rotate(-90)" font-size="12.5" fill="#e0e0e0" textLength="61.30" lengthAdjust="spacingAndGlyphs">Level (dBc)</text>
<rect x="543.1" y="67" width="141.2" height="14" fill="#000"/>
<text x="544.60" y="78" font-size="11" fill="#ffffff" textLength="138.20" lengthAdjust="spacingAndGlyphs">WCDMA 3.84Mcps Downlink</text>
<rect x="855.4" y="67" width="99.7" height="14" fill="#000"/>
<text x="856.90" y="78" font-size="11" fill="#00ecec" textLength="96.70" lengthAdjust="spacingAndGlyphs">Active Channels: 68</text>
<rect x="856.4" y="82" width="98.7" height="14" fill="#000"/>
<text x="857.90" y="93" font-size="11" fill="#00ecec" textLength="95.70" lengthAdjust="spacingAndGlyphs">Peak CDE: -64.34dB</text>
<rect x="53" y="386" width="426" height="281" fill="#000"/>
<path d="M266.5 385V667M124 526.5H407" stroke="#565656" stroke-width="1.15" stroke-dasharray="3.6 2.4" fill="none"/>
<path d="M195 453h1v1h-1zM204 454h1v1h-1zM197 455h1v1h-1zM199 455h1v1h-1zM200 455h1v1h-1zM201 455h1v1h-1zM203 455h1v1h-1zM196 456h1v1h-1zM197 456h1v1h-1zM198 456h1v1h-1zM199 456h1v1h-1zM200 456h1v1h-1zM201 456h1v1h-1zM202 456h1v1h-1zM203 456h1v1h-1zM204 456h1v1h-1zM205 456h1v1h-1zM206 456h1v1h-1zM196 457h1v1h-1zM197 457h1v1h-1zM198 457h1v1h-1zM199 457h1v1h-1zM203 457h1v1h-1zM204 457h1v1h-1zM205 457h1v1h-1zM206 457h1v1h-1zM209 457h1v1h-1zM210 457h1v1h-1zM195 458h1v1h-1zM197 458h1v1h-1zM198 458h1v1h-1zM204 458h1v1h-1zM206 458h1v1h-1zM207 458h1v1h-1zM210 458h1v1h-1zM195 459h1v1h-1zM196 459h1v1h-1zM197 459h1v1h-1zM205 459h1v1h-1zM206 459h1v1h-1zM207 459h1v1h-1zM211 459h1v1h-1zM196 460h1v1h-1zM206 460h1v1h-1zM196 461h1v1h-1zM206 461h1v1h-1zM207 461h1v1h-1zM194 462h1v1h-1zM195 462h1v1h-1zM196 462h1v1h-1zM206 462h1v1h-1zM207 462h1v1h-1zM208 462h1v1h-1zM194 463h1v1h-1zM196 463h1v1h-1zM197 463h1v1h-1zM205 463h1v1h-1zM206 463h1v1h-1zM211 463h1v1h-1zM195 464h1v1h-1zM196 464h1v1h-1zM198 464h1v1h-1zM204 464h1v1h-1zM205 464h1v1h-1zM207 464h1v1h-1zM208 464h1v1h-1zM197 465h1v1h-1zM198 465h1v1h-1zM199 465h1v1h-1zM203 465h1v1h-1zM204 465h1v1h-1zM205 465h1v1h-1zM198 466h1v1h-1zM199 466h1v1h-1zM201 466h1v1h-1zM202 466h1v1h-1zM203 466h1v1h-1zM204 466h1v1h-1zM205 466h1v1h-1zM208 466h1v1h-1zM196 467h1v1h-1zM200 467h1v1h-1zM201 467h1v1h-1zM203 467h1v1h-1zM207 467h1v1h-1zM208 467h1v1h-1zM199 468h1v1h-1zM204 468h1v1h-1zM206 469h1v1h-1zM204 471h1v1h-1z" fill="#00c400" shape-rendering="crispEdges"/>
<path d="M200 457h1v1h-1zM201 457h1v1h-1zM202 457h1v1h-1zM199 458h1v1h-1zM200 458h1v1h-1zM201 458h1v1h-1zM202 458h1v1h-1zM203 458h1v1h-1zM198 459h1v1h-1zM199 459h1v1h-1zM200 459h1v1h-1zM201 459h1v1h-1zM202 459h1v1h-1zM203 459h1v1h-1zM204 459h1v1h-1zM197 460h1v1h-1zM198 460h1v1h-1zM199 460h1v1h-1zM200 460h1v1h-1zM201 460h1v1h-1zM202 460h1v1h-1zM203 460h1v1h-1zM204 460h1v1h-1zM205 460h1v1h-1zM197 461h1v1h-1zM198 461h1v1h-1zM199 461h1v1h-1zM200 461h1v1h-1zM201 461h1v1h-1zM202 461h1v1h-1zM203 461h1v1h-1zM204 461h1v1h-1zM205 461h1v1h-1zM197 462h1v1h-1zM198 462h1v1h-1zM199 462h1v1h-1zM200 462h1v1h-1zM201 462h1v1h-1zM202 462h1v1h-1zM203 462h1v1h-1zM204 462h1v1h-1zM205 462h1v1h-1zM198 463h1v1h-1zM199 463h1v1h-1zM200 463h1v1h-1zM201 463h1v1h-1zM202 463h1v1h-1zM203 463h1v1h-1zM204 463h1v1h-1zM199 464h1v1h-1zM200 464h1v1h-1zM201 464h1v1h-1zM202 464h1v1h-1zM203 464h1v1h-1zM200 465h1v1h-1zM201 465h1v1h-1zM202 465h1v1h-1z" fill="#00f000" shape-rendering="crispEdges"/>
<circle cx="201.5" cy="461.5" r="3.8" fill="url(#cg)"/>
<path d="M325 453h1v1h-1zM330 454h1v1h-1zM332 454h1v1h-1zM327 455h1v1h-1zM330 455h1v1h-1zM331 455h1v1h-1zM333 455h1v1h-1zM321 456h1v1h-1zM327 456h1v1h-1zM328 456h1v1h-1zM329 456h1v1h-1zM330 456h1v1h-1zM331 456h1v1h-1zM332 456h1v1h-1zM325 457h1v1h-1zM326 457h1v1h-1zM327 457h1v1h-1zM328 457h1v1h-1zM332 457h1v1h-1zM333 457h1v1h-1zM334 457h1v1h-1zM335 457h1v1h-1zM336 457h1v1h-1zM322 458h1v1h-1zM323 458h1v1h-1zM324 458h1v1h-1zM325 458h1v1h-1zM326 458h1v1h-1zM327 458h1v1h-1zM333 458h1v1h-1zM335 458h1v1h-1zM336 458h1v1h-1zM320 459h1v1h-1zM325 459h1v1h-1zM326 459h1v1h-1zM334 459h1v1h-1zM335 459h1v1h-1zM336 459h1v1h-1zM324 460h1v1h-1zM325 460h1v1h-1zM335 460h1v1h-1zM336 460h1v1h-1zM338 460h1v1h-1zM325 461h1v1h-1zM325 462h1v1h-1zM335 462h1v1h-1zM336 462h1v1h-1zM337 462h1v1h-1zM324 463h1v1h-1zM325 463h1v1h-1zM326 463h1v1h-1zM334 463h1v1h-1zM335 463h1v1h-1zM336 463h1v1h-1zM337 463h1v1h-1zM324 464h1v1h-1zM325 464h1v1h-1zM326 464h1v1h-1zM327 464h1v1h-1zM333 464h1v1h-1zM334 464h1v1h-1zM337 464h1v1h-1zM325 465h1v1h-1zM326 465h1v1h-1zM327 465h1v1h-1zM328 465h1v1h-1zM332 465h1v1h-1zM333 465h1v1h-1zM334 465h1v1h-1zM335 465h1v1h-1zM327 466h1v1h-1zM328 466h1v1h-1zM329 466h1v1h-1zM330 466h1v1h-1zM331 466h1v1h-1zM332 466h1v1h-1zM334 466h1v1h-1zM335 466h1v1h-1zM326 467h1v1h-1zM330 467h1v1h-1zM331 467h1v1h-1zM334 467h1v1h-1zM329 468h1v1h-1zM331 468h1v1h-1z" fill="#00c400" shape-rendering="crispEdges"/>
<path d="M329 457h1v1h-1zM330 457h1v1h-1zM328 458h1v1h-1zM329 458h1v1h-1zM330 458h1v1h-1zM331 458h1v1h-1zM332 458h1v1h-1zM327 459h1v1h-1zM328 459h1v1h-1zM329 459h1v1h-1zM330 459h1v1h-1zM331 459h1v1h-1zM332 459h1v1h-1zM333 459h1v1h-1zM326 460h1v1h-1zM327 460h1v1h-1zM328 460h1v1h-1zM329 460h1v1h-1zM330 460h1v1h-1zM331 460h1v1h-1zM332 460h1v1h-1zM333 460h1v1h-1zM334 460h1v1h-1zM326 461h1v1h-1zM327 461h1v1h-1zM328 461h1v1h-1zM329 461h1v1h-1zM330 461h1v1h-1zM331 461h1v1h-1zM332 461h1v1h-1zM333 461h1v1h-1zM334 461h1v1h-1zM326 462h1v1h-1zM327 462h1v1h-1zM328 462h1v1h-1zM329 462h1v1h-1zM330 462h1v1h-1zM331 462h1v1h-1zM332 462h1v1h-1zM333 462h1v1h-1zM334 462h1v1h-1zM327 463h1v1h-1zM328 463h1v1h-1zM329 463h1v1h-1zM330 463h1v1h-1zM331 463h1v1h-1zM332 463h1v1h-1zM333 463h1v1h-1zM328 464h1v1h-1zM329 464h1v1h-1zM330 464h1v1h-1zM331 464h1v1h-1zM332 464h1v1h-1zM329 465h1v1h-1zM330 465h1v1h-1zM331 465h1v1h-1z" fill="#00f000" shape-rendering="crispEdges"/>
<circle cx="330.5" cy="461.5" r="3.8" fill="url(#cg)"/>
<path d="M203 580h1v1h-1zM204 580h1v1h-1zM196 582h1v1h-1zM194 583h1v1h-1zM200 584h1v1h-1zM204 584h1v1h-1zM206 584h1v1h-1zM196 585h1v1h-1zM198 585h1v1h-1zM199 585h1v1h-1zM200 585h1v1h-1zM201 585h1v1h-1zM202 585h1v1h-1zM203 585h1v1h-1zM196 586h1v1h-1zM197 586h1v1h-1zM198 586h1v1h-1zM199 586h1v1h-1zM203 586h1v1h-1zM204 586h1v1h-1zM191 587h1v1h-1zM195 587h1v1h-1zM197 587h1v1h-1zM198 587h1v1h-1zM204 587h1v1h-1zM205 587h1v1h-1zM193 588h1v1h-1zM194 588h1v1h-1zM196 588h1v1h-1zM197 588h1v1h-1zM205 588h1v1h-1zM206 588h1v1h-1zM195 589h1v1h-1zM196 589h1v1h-1zM206 589h1v1h-1zM207 589h1v1h-1zM192 590h1v1h-1zM195 590h1v1h-1zM196 590h1v1h-1zM206 590h1v1h-1zM195 591h1v1h-1zM196 591h1v1h-1zM195 592h1v1h-1zM196 592h1v1h-1zM197 592h1v1h-1zM205 592h1v1h-1zM206 592h1v1h-1zM207 592h1v1h-1zM208 592h1v1h-1zM197 593h1v1h-1zM198 593h1v1h-1zM204 593h1v1h-1zM205 593h1v1h-1zM196 594h1v1h-1zM197 594h1v1h-1zM203 594h1v1h-1zM204 594h1v1h-1zM207 594h1v1h-1zM197 595h1v1h-1zM198 595h1v1h-1zM199 595h1v1h-1zM200 595h1v1h-1zM201 595h1v1h-1zM202 595h1v1h-1zM203 595h1v1h-1zM204 595h1v1h-1zM206 595h1v1h-1zM209 595h1v1h-1zM199 596h1v1h-1zM201 596h1v1h-1zM202 596h1v1h-1zM203 596h1v1h-1zM204 596h1v1h-1zM205 596h1v1h-1zM199 597h1v1h-1zM202 597h1v1h-1zM195 598h1v1h-1zM199 598h1v1h-1zM198 600h1v1h-1z" fill="#00c400" shape-rendering="crispEdges"/>
<path d="M200 586h1v1h-1zM201 586h1v1h-1zM202 586h1v1h-1zM199 587h1v1h-1zM200 587h1v1h-1zM201 587h1v1h-1zM202 587h1v1h-1zM203 587h1v1h-1zM198 588h1v1h-1zM199 588h1v1h-1zM200 588h1v1h-1zM201 588h1v1h-1zM202 588h1v1h-1zM203 588h1v1h-1zM204 588h1v1h-1zM197 589h1v1h-1zM198 589h1v1h-1zM199 589h1v1h-1zM200 589h1v1h-1zM201 589h1v1h-1zM202 589h1v1h-1zM203 589h1v1h-1zM204 589h1v1h-1zM205 589h1v1h-1zM197 590h1v1h-1zM198 590h1v1h-1zM199 590h1v1h-1zM200 590h1v1h-1zM201 590h1v1h-1zM202 590h1v1h-1zM203 590h1v1h-1zM204 590h1v1h-1zM205 590h1v1h-1zM197 591h1v1h-1zM198 591h1v1h-1zM199 591h1v1h-1zM200 591h1v1h-1zM201 591h1v1h-1zM202 591h1v1h-1zM203 591h1v1h-1zM204 591h1v1h-1zM205 591h1v1h-1zM199 592h1v1h-1zM200 592h1v1h-1zM201 592h1v1h-1zM202 592h1v1h-1zM203 592h1v1h-1zM204 592h1v1h-1zM199 593h1v1h-1zM200 593h1v1h-1zM201 593h1v1h-1zM202 593h1v1h-1zM203 593h1v1h-1zM200 594h1v1h-1zM201 594h1v1h-1zM202 594h1v1h-1z" fill="#00f000" shape-rendering="crispEdges"/>
<circle cx="201.5" cy="590.5" r="3.8" fill="url(#cg)"/>
<path d="M326 581h1v1h-1zM327 583h1v1h-1zM330 583h1v1h-1zM326 584h1v1h-1zM327 584h1v1h-1zM328 584h1v1h-1zM330 584h1v1h-1zM326 585h1v1h-1zM329 585h1v1h-1zM330 585h1v1h-1zM331 585h1v1h-1zM332 585h1v1h-1zM334 585h1v1h-1zM325 586h1v1h-1zM327 586h1v1h-1zM328 586h1v1h-1zM332 586h1v1h-1zM334 586h1v1h-1zM335 586h1v1h-1zM325 587h1v1h-1zM327 587h1v1h-1zM333 587h1v1h-1zM334 587h1v1h-1zM324 588h1v1h-1zM325 588h1v1h-1zM326 588h1v1h-1zM334 588h1v1h-1zM335 588h1v1h-1zM336 588h1v1h-1zM320 589h1v1h-1zM325 589h1v1h-1zM335 589h1v1h-1zM324 590h1v1h-1zM325 590h1v1h-1zM335 590h1v1h-1zM336 590h1v1h-1zM324 591h1v1h-1zM335 591h1v1h-1zM336 591h1v1h-1zM325 592h1v1h-1zM326 592h1v1h-1zM334 592h1v1h-1zM335 592h1v1h-1zM336 592h1v1h-1zM339 592h1v1h-1zM324 593h1v1h-1zM325 593h1v1h-1zM326 593h1v1h-1zM327 593h1v1h-1zM333 593h1v1h-1zM335 593h1v1h-1zM336 593h1v1h-1zM325 594h1v1h-1zM326 594h1v1h-1zM327 594h1v1h-1zM328 594h1v1h-1zM332 594h1v1h-1zM333 594h1v1h-1zM334 594h1v1h-1zM335 594h1v1h-1zM325 595h1v1h-1zM327 595h1v1h-1zM328 595h1v1h-1zM330 595h1v1h-1zM331 595h1v1h-1zM333 595h1v1h-1zM334 595h1v1h-1zM335 595h1v1h-1zM328 596h1v1h-1zM329 596h1v1h-1zM330 596h1v1h-1zM331 596h1v1h-1zM332 596h1v1h-1zM334 596h1v1h-1zM326 597h1v1h-1zM329 597h1v1h-1zM331 597h1v1h-1zM335 598h1v1h-1z" fill="#00c400" shape-rendering="crispEdges"/>
<path d="M329 586h1v1h-1zM330 586h1v1h-1zM331 586h1v1h-1zM328 587h1v1h-1zM329 587h1v1h-1zM330 587h1v1h-1zM331 587h1v1h-1zM332 587h1v1h-1zM327 588h1v1h-1zM328 588h1v1h-1zM329 588h1v1h-1zM330 588h1v1h-1zM331 588h1v1h-1zM332 588h1v1h-1zM333 588h1v1h-1zM326 589h1v1h-1zM327 589h1v1h-1zM328 589h1v1h-1zM329 589h1v1h-1zM330 589h1v1h-1zM331 589h1v1h-1zM332 589h1v1h-1zM333 589h1v1h-1zM334 589h1v1h-1zM326 590h1v1h-1zM327 590h1v1h-1zM328 590h1v1h-1zM329 590h1v1h-1zM330 590h1v1h-1zM331 590h1v1h-1zM332 590h1v1h-1zM333 590h1v1h-1zM334 590h1v1h-1zM326 591h1v1h-1zM327 591h1v1h-1zM328 591h1v1h-1zM329 591h1v1h-1zM330 591h1v1h-1zM331 591h1v1h-1zM332 591h1v1h-1zM333 591h1v1h-1zM334 591h1v1h-1zM327 592h1v1h-1zM328 592h1v1h-1zM329 592h1v1h-1zM330 592h1v1h-1zM331 592h1v1h-1zM332 592h1v1h-1zM333 592h1v1h-1zM328 593h1v1h-1zM329 593h1v1h-1zM330 593h1v1h-1zM331 593h1v1h-1zM332 593h1v1h-1zM329 594h1v1h-1zM330 594h1v1h-1zM331 594h1v1h-1z" fill="#00f000" shape-rendering="crispEdges"/>
<circle cx="330.5" cy="590.5" r="3.8" fill="url(#cg)"/>
<path d="M52.5 385V668M52 667.5H480" stroke="#b8b8b8" stroke-width="1" fill="none" shape-rendering="crispEdges"/>
<text x="44.85" y="387.3" font-size="8.4" fill="#e8e8e8" textLength="3.85" lengthAdjust="spacingAndGlyphs">1</text>
<text x="39.10" y="528.3" font-size="8.4" fill="#e8e8e8" textLength="9.60" lengthAdjust="spacingAndGlyphs">0.0</text>
<text x="40.80" y="669.3" font-size="8.4" fill="#e8e8e8" textLength="7.90" lengthAdjust="spacingAndGlyphs">−1</text>
<text x="120.05" y="679" font-size="8.4" fill="#e8e8e8" textLength="7.90" lengthAdjust="spacingAndGlyphs">−1</text>
<text x="261.70" y="679" font-size="8.4" fill="#e8e8e8" textLength="9.60" lengthAdjust="spacingAndGlyphs">0.0</text>
<text x="405.07" y="679" font-size="8.4" fill="#e8e8e8" textLength="3.85" lengthAdjust="spacingAndGlyphs">1</text>
<text x="264.51" y="692" font-size="10.7" fill="#e0e0e0" textLength="2.97" lengthAdjust="spacingAndGlyphs">I</text>
<text transform="translate(23 530.28) rotate(-90)" font-size="11" fill="#e0e0e0" textLength="8.56" lengthAdjust="spacingAndGlyphs">Q</text>
<rect x="61.3" y="390" width="141.2" height="14" fill="#000"/>
<text x="62.80" y="401" font-size="11" fill="#ffffff" textLength="138.20" lengthAdjust="spacingAndGlyphs">WCDMA 3.84Mcps Downlink</text>
<rect x="61.3" y="405" width="129.9" height="14" fill="#000"/>
<text x="62.80" y="416" font-size="11" fill="#ffffff" textLength="126.90" lengthAdjust="spacingAndGlyphs">Symbols Analysed: 19629</text>
<rect x="61.3" y="420" width="134.5" height="14" fill="#000"/>
<text x="62.80" y="431" font-size="11" fill="#ffffff" textLength="131.50" lengthAdjust="spacingAndGlyphs">EVM All Sym (RMS): 3.09%</text>
<rect x="61.3" y="435" width="129.9" height="14" fill="#000"/>
<text x="62.80" y="446" font-size="11" fill="#ffffff" textLength="126.90" lengthAdjust="spacingAndGlyphs">EVM All Sym (Pk): 15.52%</text>
<rect x="61.3" y="450" width="73.7" height="14" fill="#000"/>
<text x="62.80" y="461" font-size="11" fill="#ffffff" textLength="70.70" lengthAdjust="spacingAndGlyphs">SNR: 30.19 dB</text>
<rect x="361.0" y="390" width="111.3" height="14" fill="#000"/>
<text x="362.50" y="401" font-size="11" fill="#00ecec" textLength="108.30" lengthAdjust="spacingAndGlyphs">QPSK Symbols: 19629</text>
<rect x="354.1" y="405" width="118.2" height="14" fill="#000"/>
<text x="355.60" y="416" font-size="11" fill="#00ecec" textLength="115.20" lengthAdjust="spacingAndGlyphs">QPSK EVM: 3.09% RMS</text>
<rect x="358.9" y="420" width="113.4" height="14" fill="#000"/>
<text x="360.40" y="431" font-size="11" fill="#00ecec" textLength="110.40" lengthAdjust="spacingAndGlyphs">QPSK EVM: 15.52% Pk</text>
<rect x="380.8" y="435" width="91.5" height="14" fill="#000"/>
<text x="382.30" y="446" font-size="11" fill="#00ecec" textLength="88.50" lengthAdjust="spacingAndGlyphs">Freq Err: 0.199 Hz</text>
<rect x="346.8" y="450" width="125.5" height="14" fill="#000"/>
<text x="348.30" y="461" font-size="11" fill="#00ecec" textLength="122.50" lengthAdjust="spacingAndGlyphs">Time Sync: -0.000000 ms</text>
<rect x="365.9" y="465" width="106.4" height="14" fill="#000"/>
<text x="367.40" y="476" font-size="11" fill="#00ecec" textLength="103.40" lengthAdjust="spacingAndGlyphs">IQ Offset: -42.55 dBc</text>
<rect x="373.5" y="480" width="98.8" height="14" fill="#000"/>
<text x="375.00" y="491" font-size="11" fill="#00ecec" textLength="95.80" lengthAdjust="spacingAndGlyphs">IQ Gain Err: 0.00 dB</text>
<rect x="364.5" y="495" width="107.8" height="14" fill="#000"/>
<text x="366.00" y="506" font-size="11" fill="#00ecec" textLength="104.80" lengthAdjust="spacingAndGlyphs">IQ Quad Err: 0.00 deg</text>
<rect x="535" y="386" width="426" height="281" fill="#000"/>
<path d="M580.5 385V667M636.5 385V667M691.5 385V667M747.5 385V667M802.5 385V667M857.5 385V667M913.5 385V667M534 405.5H962M534 425.5H962M534 445.5H962M534 466.5H962M534 486.5H962M534 506.5H962M534 526.5H962M534 546.5H962M534 566.5H962M534 586.5H962M534 607.5H962M534 627.5H962M534 647.5H962M534 385.5H962M961.5 385V667" stroke="#565656" stroke-width="1.15" stroke-dasharray="4.4 1.6" fill="none"/>
<path d="M534.5 385V668M534 667.5H962" stroke="#b8b8b8" stroke-width="1" fill="none" shape-rendering="crispEdges"/>
<path d="M535.5 664V668M536.5 665V668M537.5 665V668M538.5 665V668M539.5 665V668M540.5 664V668M541.5 665V668M542.5 665V668M543.5 662V668M544.5 663V668M545.5 666V668M546.5 663V668M547.5 666V668M548.5 665V668M549.5 665V668M550.5 664V668M551.5 662V668M552.5 665V668M553.5 665V668M554.5 665V668M555.5 666V668M556.5 663V668M557.5 664V668M558.5 664V668M559.5 665V668M560.5 664V668M561.5 662V668M562.5 664V668M563.5 666V668M564.5 665V668M565.5 665V668M566.5 665V668M567.5 664V668M568.5 665V668M569.5 664V668M570.5 664V668M571.5 665V668M572.5 665V668M573.5 664V668M574.5 666V668M575.5 666V668M576.5 664V668M577.5 664V668M578.5 665V668M579.5 665V668M580.5 665V668M581.5 664V668M582.5 661V668M583.5 665V668M584.5 665V668M585.5 665V668M586.5 666V668M587.5 666V668M588.5 660V668M589.5 666V668M590.5 665V668M591.5 665V668M592.5 665V668M593.5 662V668M594.5 665V668M595.5 665V668M596.5 665V668M597.5 666V668M598.5 663V668M599.5 664V668M600.5 665V668M601.5 665V668M602.5 665V668M603.5 664V668M604.5 664V668M605.5 665V668M606.5 663V668M607.5 664V668M608.5 665V668M609.5 665V668M610.5 665V668M611.5 665V668M612.5 665V668M613.5 665V668M614.5 664V668M615.5 665V668M616.5 666V668M617.5 663V668M618.5 664V668M619.5 664V668M620.5 661V668M621.5 664V668M622.5 665V668M623.5 664V668M624.5 665V668M625.5 664V668M626.5 664V668M627.5 663V668M628.5 665V668M629.5 665V668M630.5 665V668M631.5 662V668M632.5 665V668M633.5 664V668M634.5 664V668M635.5 665V668M636.5 665V668M637.5 665V668M638.5 666V668M639.5 665V668M640.5 662V668M641.5 664V668M642.5 666V668M643.5 665V668M644.5 664V668M645.5 665V668M646.5 665V668M647.5 665V668M648.5 665V668M649.5 665V668M650.5 664V668M651.5 666V668M652.5 666V668M653.5 664V668M654.5 665V668M655.5 665V668M656.5 666V668M657.5 666V668M658.5 665V668M659.5 665V668M660.5 664V668M661.5 665V668M662.5 664V668M663.5 664V668M664.5 666V668M665.5 665V668M666.5 666V668M667.5 664V668M668.5 661V668M669.5 664V668M670.5 663V668M671.5 665V668M672.5 665V668M673.5 666V668M674.5 666V668M675.5 663V668M676.5 663V668M677.5 665V668M678.5 665V668M679.5 665V668M680.5 665V668M681.5 666V668M682.5 663V668M683.5 544V668M684.5 523V562M685.5 514V553M686.5 510V540M687.5 504V530M688.5 498V531M689.5 495V528M690.5 495V520M691.5 493V513M692.5 491V517M693.5 487V512M694.5 489V513M695.5 486V513M696.5 485V514M697.5 485V513M698.5 485V508M699.5 484V503M700.5 484V507M701.5 482V507M702.5 484V504M703.5 483V515M704.5 485V506M705.5 483V506M706.5 484V507M707.5 484V506M708.5 483V507M709.5 480V504M710.5 484V507M711.5 484V508M712.5 482V510M713.5 482V517M714.5 484V505M715.5 480V507M716.5 483V507M717.5 482V506M718.5 484V506M719.5 484V505M720.5 481V526M721.5 484V502M722.5 483V509M723.5 483V504M724.5 482V505M725.5 484V505M726.5 484V507M727.5 482V510M728.5 483V509M729.5 484V510M730.5 483V504M731.5 483V506M732.5 483V505M733.5 482V504M734.5 483V505M735.5 484V504M736.5 484V504M737.5 477V506M738.5 483V504M739.5 482V509M740.5 484V507M741.5 484V505M742.5 480V503M743.5 481V505M744.5 482V512M745.5 484V509M746.5 482V502M747.5 482V508M748.5 483V505M749.5 483V505M750.5 484V504M751.5 482V506M752.5 483V506M753.5 483V506M754.5 483V506M755.5 483V504M756.5 484V505M757.5 483V509M758.5 483V504M759.5 482V508M760.5 479V510M761.5 483V502M762.5 483V506M763.5 483V505M764.5 484V504M765.5 483V508M766.5 482V502M767.5 482V510M768.5 483V507M769.5 483V505M770.5 482V505M771.5 481V508M772.5 483V506M773.5 484V505M774.5 484V500M775.5 484V507M776.5 483V507M777.5 484V507M778.5 482V523M779.5 479V508M780.5 484V505M781.5 482V508M782.5 481V506M783.5 483V502M784.5 483V504M785.5 482V509M786.5 483V512M787.5 482V504M788.5 484V507M789.5 482V504M790.5 484V507M791.5 482V508M792.5 482V503M793.5 482V507M794.5 483V514M795.5 482V506M796.5 484V507M797.5 481V505M798.5 482V509M799.5 485V510M800.5 485V513M801.5 486V515M802.5 487V516M803.5 489V518M804.5 490V516M805.5 491V519M806.5 491V523M807.5 495V526M808.5 497V528M809.5 501V530M810.5 505V535M811.5 511V540M812.5 524V608M813.5 596V668M814.5 664V668M815.5 660V668M816.5 665V668M817.5 666V668M818.5 664V668M819.5 665V668M820.5 665V668M821.5 663V668M822.5 663V668M823.5 664V668M824.5 666V668M825.5 666V668M826.5 665V668M827.5 665V668M828.5 666V668M829.5 666V668M830.5 665V668M831.5 666V668M832.5 664V668M833.5 665V668M834.5 665V668M835.5 664V668M836.5 661V668M837.5 666V668M838.5 664V668M839.5 665V668M840.5 665V668M841.5 665V668M842.5 664V668M843.5 665V668M844.5 665V668M845.5 661V668M846.5 665V668M847.5 665V668M848.5 665V668M849.5 665V668M850.5 665V668M851.5 665V668M852.5 666V668M853.5 664V668M854.5 665V668M855.5 664V668M856.5 664V668M857.5 664V668M858.5 663V668M859.5 663V668M860.5 666V668M861.5 665V668M862.5 663V668M863.5 666V668M864.5 666V668M865.5 660V668M866.5 665V668M867.5 666V668M868.5 665V668M869.5 663V668M870.5 665V668M871.5 662V668M872.5 665V668M873.5 665V668M874.5 665V668M875.5 661V668M876.5 665V668M877.5 666V668M878.5 664V668M879.5 666V668M880.5 663V668M881.5 666V668M882.5 665V668M883.5 665V668M884.5 666V668M885.5 664V668M886.5 665V668M887.5 666V668M888.5 665V668M889.5 662V668M890.5 664V668M891.5 666V668M892.5 665V668M893.5 666V668M894.5 665V668M895.5 664V668M896.5 663V668M897.5 665V668M898.5 665V668M899.5 666V668M900.5 663V668M901.5 665V668M902.5 665V668M903.5 665V668M904.5 665V668M905.5 666V668M906.5 664V668M907.5 664V668M908.5 666V668M909.5 665V668M910.5 666V668M911.5 665V668M912.5 665V668M913.5 666V668M914.5 660V668M915.5 665V668M916.5 666V668M917.5 665V668M918.5 661V668M919.5 665V668M920.5 660V668M921.5 661V668M922.5 665V668M923.5 665V668M924.5 664V668M925.5 663V668M926.5 666V668M927.5 666V668M928.5 665V668M929.5 666V668M930.5 664V668M931.5 664V668M932.5 663V668M933.5 664V668M934.5 664V668M935.5 665V668M936.5 666V668M937.5 665V668M938.5 665V668M939.5 664V668M940.5 666V668M941.5 664V668M942.5 663V668M943.5 664V668M944.5 665V668M945.5 663V668M946.5 665V668M947.5 665V668M948.5 666V668M949.5 665V668M950.5 663V668M951.5 665V668M952.5 664V668M953.5 662V668M954.5 665V668M955.5 665V668M956.5 665V668M957.5 662V668M958.5 665V668M959.5 666V668M960.5 665V668M961.5 663V668" stroke="#00ff00" stroke-width="1" fill="none" shape-rendering="crispEdges"/>
<path d="M699.3 459.5H707.7L703.5 463.6z" fill="none" stroke="#00f0f0" stroke-width="1.1"/>
<text x="527.15" y="387.3" font-size="8.4" fill="#e8e8e8" textLength="3.85" lengthAdjust="spacingAndGlyphs">0</text>
<text x="519.25" y="407.3" font-size="8.4" fill="#e8e8e8" textLength="11.75" lengthAdjust="spacingAndGlyphs">−10</text>
<text x="519.25" y="427.3" font-size="8.4" fill="#e8e8e8" textLength="11.75" lengthAdjust="spacingAndGlyphs">−20</text>
<text x="519.25" y="447.3" font-size="8.4" fill="#e8e8e8" textLength="11.75" lengthAdjust="spacingAndGlyphs">−30</text>
<text x="519.25" y="468.3" font-size="8.4" fill="#e8e8e8" textLength="11.75" lengthAdjust="spacingAndGlyphs">−40</text>
<text x="519.25" y="488.3" font-size="8.4" fill="#e8e8e8" textLength="11.75" lengthAdjust="spacingAndGlyphs">−50</text>
<text x="519.25" y="508.3" font-size="8.4" fill="#e8e8e8" textLength="11.75" lengthAdjust="spacingAndGlyphs">−60</text>
<text x="519.25" y="528.3" font-size="8.4" fill="#e8e8e8" textLength="11.75" lengthAdjust="spacingAndGlyphs">−70</text>
<text x="519.25" y="548.3" font-size="8.4" fill="#e8e8e8" textLength="11.75" lengthAdjust="spacingAndGlyphs">−80</text>
<text x="519.25" y="568.3" font-size="8.4" fill="#e8e8e8" textLength="11.75" lengthAdjust="spacingAndGlyphs">−90</text>
<text x="515.40" y="588.3" font-size="8.4" fill="#e8e8e8" textLength="15.60" lengthAdjust="spacingAndGlyphs">−100</text>
<text x="515.40" y="609.3" font-size="8.4" fill="#e8e8e8" textLength="15.60" lengthAdjust="spacingAndGlyphs">−110</text>
<text x="515.40" y="629.3" font-size="8.4" fill="#e8e8e8" textLength="15.60" lengthAdjust="spacingAndGlyphs">−120</text>
<text x="515.40" y="649.3" font-size="8.4" fill="#e8e8e8" textLength="15.60" lengthAdjust="spacingAndGlyphs">−130</text>
<text x="515.40" y="669.3" font-size="8.4" fill="#e8e8e8" textLength="15.60" lengthAdjust="spacingAndGlyphs">−140</text>
<text x="575.55" y="679" font-size="8.4" fill="#e8e8e8" textLength="7.90" lengthAdjust="spacingAndGlyphs">−6</text>
<text x="631.55" y="679" font-size="8.4" fill="#e8e8e8" textLength="7.90" lengthAdjust="spacingAndGlyphs">−4</text>
<text x="686.55" y="679" font-size="8.4" fill="#e8e8e8" textLength="7.90" lengthAdjust="spacingAndGlyphs">−2</text>
<text x="745.58" y="679" font-size="8.4" fill="#e8e8e8" textLength="3.85" lengthAdjust="spacingAndGlyphs">0</text>
<text x="800.58" y="679" font-size="8.4" fill="#e8e8e8" textLength="3.85" lengthAdjust="spacingAndGlyphs">2</text>
<text x="855.58" y="679" font-size="8.4" fill="#e8e8e8" textLength="3.85" lengthAdjust="spacingAndGlyphs">4</text>
<text x="911.58" y="679" font-size="8.4" fill="#e8e8e8" textLength="3.85" lengthAdjust="spacingAndGlyphs">6</text>
<text x="706.25" y="691" font-size="10.7" fill="#e0e0e0" textLength="79.50" lengthAdjust="spacingAndGlyphs">Frequency (MHz)</text>
<text transform="translate(505.5 570.50) rotate(-90)" font-size="12.5" fill="#e0e0e0" textLength="70.00" lengthAdjust="spacingAndGlyphs">Level (dBFS)</text>
<rect x="543.1" y="390" width="125.2" height="14" fill="#000"/>
<text x="544.60" y="401" font-size="11" fill="#ffffff" textLength="122.20" lengthAdjust="spacingAndGlyphs">Sample Rate: 15.36 Msps</text>
<rect x="543.1" y="405" width="128.6" height="14" fill="#000"/>
<text x="544.60" y="416" font-size="11" fill="#ffffff" textLength="125.60" lengthAdjust="spacingAndGlyphs">Resolution BW: 468.75 Hz</text>
<rect x="543.1" y="420" width="104.2" height="14" fill="#000"/>
<text x="544.60" y="431" font-size="11" fill="#ffffff" textLength="101.20" lengthAdjust="spacingAndGlyphs">DC Offset: -41.17 dB</text>
<rect x="543.1" y="435" width="114.3" height="14" fill="#000"/>
<text x="544.60" y="446" font-size="11" fill="#ffffff" textLength="111.30" lengthAdjust="spacingAndGlyphs">Total Power: -13.01 dB</text>
<rect x="846.2" y="390" width="108.2" height="14" fill="#000"/>
<text x="847.70" y="401" font-size="11" fill="#00ecec" textLength="105.20" lengthAdjust="spacingAndGlyphs">FFT Time: 8.53333 ms</text>
<rect x="794.2" y="405" width="160.2" height="14" fill="#000"/>
<text x="795.70" y="416" font-size="11" fill="#00ecec" textLength="157.20" lengthAdjust="spacingAndGlyphs">Peak Frequency: -1.606025 MHz</text>
<rect x="830.5" y="420" width="123.9" height="14" fill="#000"/>
<text x="832.00" y="431" font-size="11" fill="#00ecec" textLength="120.90" lengthAdjust="spacingAndGlyphs">Marker Power: -38.67 dB</text>
<text x="891.30" y="693.7" font-size="8.3" fill="#f000f0" textLength="77.40" lengthAdjust="spacingAndGlyphs">FFT: 0.010 VDT: 0.008</text>
</svg></body></html>
